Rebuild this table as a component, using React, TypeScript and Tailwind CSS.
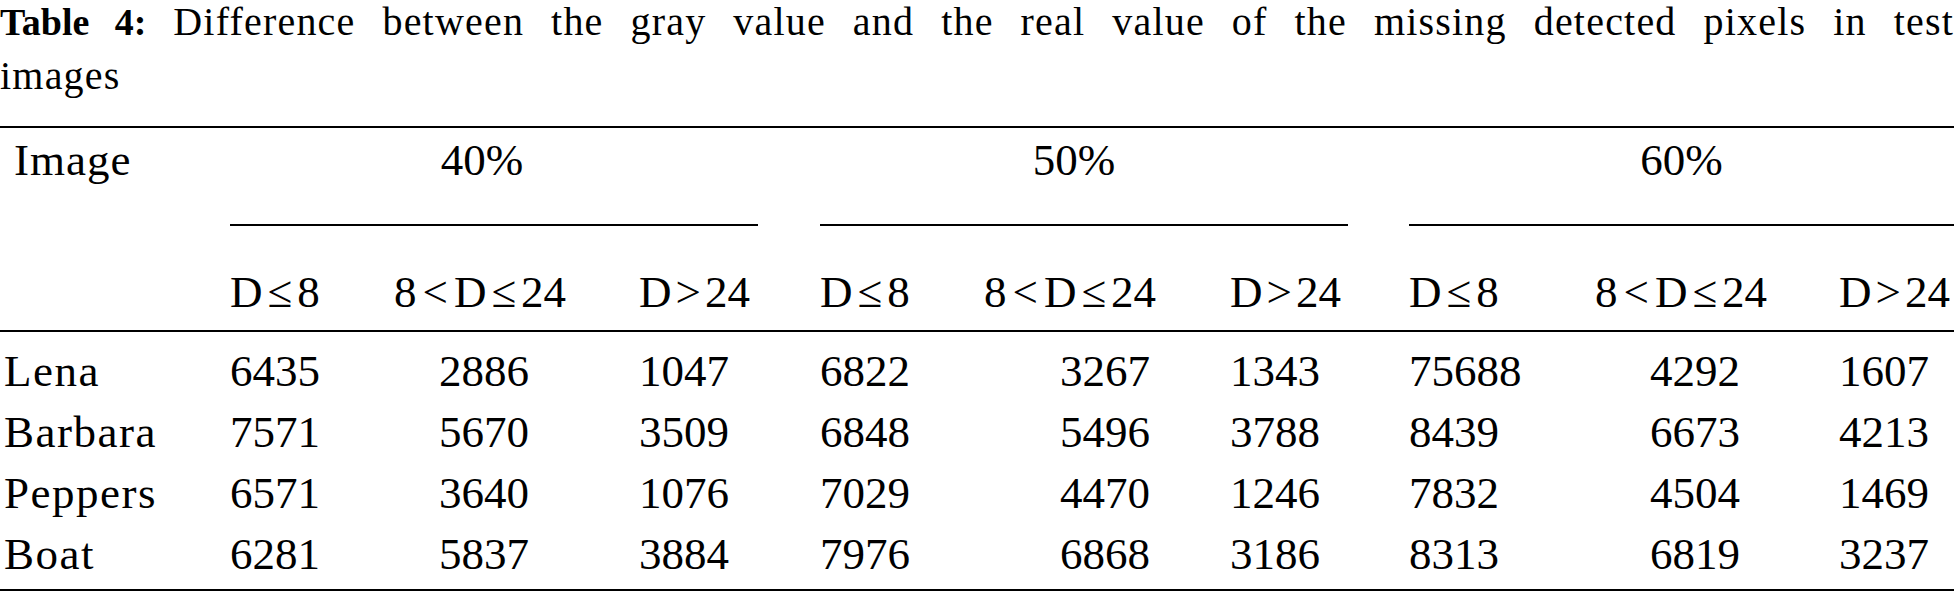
import React from "react";

const rows: [string, string[]][] = [
  ["Lena", ["6435", "2886", "1047", "6822", "3267", "1343", "75688", "4292", "1607"]],
  ["Barbara", ["7571", "5670", "3509", "6848", "5496", "3788", "8439", "6673", "4213"]],
  ["Peppers", ["6571", "3640", "1076", "7029", "4470", "1246", "7832", "4504", "1469"]],
  ["Boat", ["6281", "5837", "3884", "7976", "6868", "3186", "8313", "6819", "3237"]],
];

const GRID =
  "grid grid-cols-[230px_164px_245px_119px_62px_164px_246px_118px_61px_186px_244px_115px]";

const midPad = ["pl-[45px]", "pl-[76px]", "pl-[55px]"];

function Sub() {
  return (
    <>
      <div>
        D<span className="px-[5px]">≤</span>8
      </div>
      <div>
        8<span className="px-[6px]">&lt;</span>D<span className="px-[5px]">≤</span>24
      </div>
      <div>
        D<span className="px-[4px]">&gt;</span>24
      </div>
    </>
  );
}

export default function App() {
  return (
    <div className="w-[1954px] h-[596px] bg-white text-black [font-family:'Liberation_Serif',serif] overflow-hidden">
      <div className="text-[40px]">
        <div className="h-[44px] leading-[44px] tracking-[1.2px] text-justify [text-align-last:justify]">
          <span className="font-bold tracking-normal text-[38px]">Table 4:</span> Difference between the gray value and the real value of the missing detected pixels in test
        </div>
        <div className="mt-[10px] h-[44px] leading-[44px] tracking-[1.2px]">images</div>
      </div>

      <div className="mt-[28px] h-[2px] bg-black" />

      <div className="text-[45px]">
        <div className={GRID + " pt-[10px] leading-[45px]"}>
          <div className="pl-[14px] tracking-[1px]">Image</div>
          <div className="col-span-3 text-center pr-[24px]">40%</div>
          <div />
          <div className="col-span-3 text-center pr-[20px]">50%</div>
          <div />
          <div className="col-span-3 text-center">60%</div>
        </div>

        <div className={GRID + " mt-[41px]"}>
          <div />
          <div className="col-span-3 h-[2px] bg-black" />
          <div />
          <div className="col-span-3 h-[2px] bg-black" />
          <div />
          <div className="col-span-3 h-[2px] bg-black" />
        </div>

        <div className={GRID + " mt-[44px] leading-[45px] h-[45px] whitespace-nowrap"}>
          <div />
          <Sub />
          <div />
          <Sub />
          <div />
          <Sub />
        </div>

        <div className="mt-[15px] h-[2px] bg-black" />

        <div className="pt-[9px]">
          {rows.map(([name, vals]) => (
            <div key={name} className={GRID + " h-[61px] leading-[61px]"}>
              <div className="pl-[4px] tracking-[1.5px]">{name}</div>
              {[0, 1, 2].map((g) => (
                <React.Fragment key={g}>
                  <div>{vals[g * 3]}</div>
                  <div className={midPad[g]}>{vals[g * 3 + 1]}</div>
                  <div>{vals[g * 3 + 2]}</div>
                  {g < 2 ? <div /> : null}
                </React.Fragment>
              ))}
            </div>
          ))}
        </div>

        <div className="mt-[4px] h-[2px] bg-black" />
      </div>
    </div>
  );
}
